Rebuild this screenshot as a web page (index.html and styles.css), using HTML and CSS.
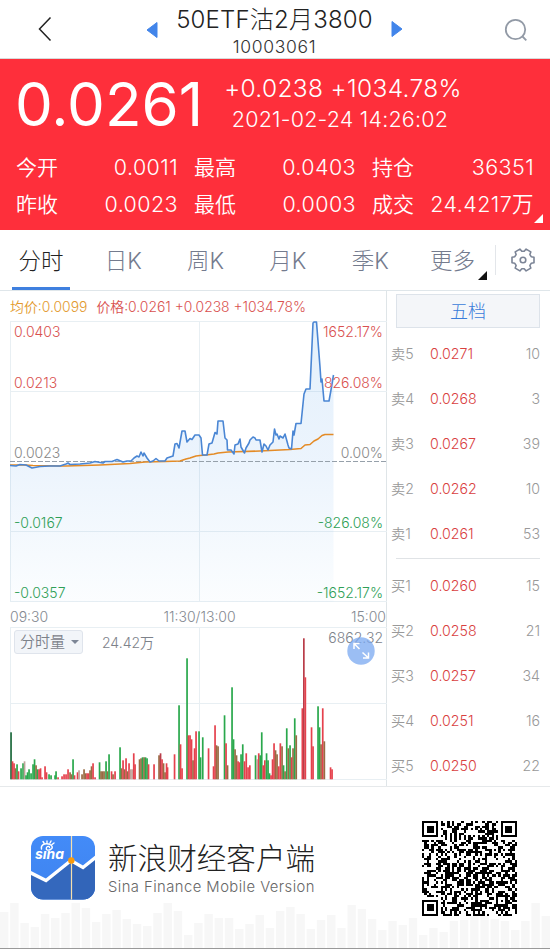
FILE: index.html
```html
<!DOCTYPE html>
<html lang="zh-CN">
<head>
    <meta charset="UTF-8">
    <meta name="viewport" content="width=device-width, initial-scale=1.0">
    <title>50ETF沽2月3800</title>
    <link rel="stylesheet" href="styles.css">
</head>
<body>
    <header class="header">
        <svg class="back" width="14" height="26" viewBox="0 0 14 26"><path d="M12.5 1.5 1.5 13l11 11.500"/></svg>
        <svg class="arrow" width="12" height="18" viewBox="0 0 12 18"><path d="M11 1.500v15L1 9z"/></svg>
        <div class="title">
            <h1><span>50ETF沽2月3800</span></h1>
            <p>10003061</p>
        </div>
        <svg class="arrow next" width="12" height="18" viewBox="0 0 12 18"><path d="M1 1.500v15L11 9z"/></svg>
        <svg class="search" width="24" height="24" viewBox="0 0 24 24"><circle cx="11.500" cy="11.500" r="9.700"/><path d="m18.500 18.500 3.800 3.800"/></svg>
    </header>

    <section class="quote">
        <div class="quote-top">
            <div class="price">0.0261</div>
            <div class="change">
                <p class="diff">+0.0238 +1034.78%</p>
                <p class="time">2021-02-24 14:26:02</p>
            </div>
        </div>
        <dl class="stats">
            <dt>今开</dt><dd>0.0011</dd><dt>最高</dt><dd>0.0403</dd><dt>持仓</dt><dd>36351</dd>
            <dt>昨收</dt><dd>0.0023</dd><dt>最低</dt><dd>0.0003</dd><dt>成交</dt><dd>24.4217万</dd>
        </dl>
        <i class="corner"></i>
    </section>

    <nav class="tabs">
        <a class="tab active">分时</a>
        <a class="tab">日K</a>
        <a class="tab">周K</a>
        <a class="tab">月K</a>
        <a class="tab">季K</a>
        <a class="tab more">更多<i></i></a>
        <span class="gear">
            <svg width="24" height="24" viewBox="0 0 24 24"><path d="M23 9.300V14.700L20.200 15.300 18.900 17.400 19.800 20.100 15.100 22.900 13.200 20.700H10.800L8.900 22.900 4.200 20.100 5.100 17.400 3.800 15.300 1 14.700V9.300L3.800 8.700 5.100 6.600 4.200 3.900 8.900 1.100 10.800 3.300H13.200L15.100 1.100 19.800 3.900 18.900 6.600 20.200 8.700Z"/><circle cx="12" cy="12" r="2.800"/></svg>
        </span>
    </nav>

    <main class="main">
        <div class="charts">
            <div class="legend"><span class="avg">均价:0.0099</span><span class="cur">价格:0.0261 +0.0238 +1034.78%</span></div>

            <div class="chart price-chart">
                <svg width="377" height="282" viewBox="10 321 377 282">
                    <defs>
                        <linearGradient id="area" x1="0" y1="0" x2="0" y2="1">
                            <stop offset="0" stop-color="#3f9be8" stop-opacity=".14"/>
                            <stop offset=".5" stop-color="#3f8fe8" stop-opacity=".1"/>
                            <stop offset="1" stop-color="#3f9be8" stop-opacity=".02"/>
                        </linearGradient>
                    </defs>
                    <path class="grid" d="M10 321.500h377M10 391.500h377M10 531.500h377M10 601.500h377M10.500 321v281M199.500 321v281"/>
                    <path id="priceArea" fill="url(#area)"/>
                    <path class="zero" d="M10 461.500h377"/>
                    <polyline class="avg-line" points="10,465 25,465 33,465.500 60,466 66,466 100,465 130,463.500 145,462 165,461.500 180,461 186,459 190,458 196,456 200,455.500 206,455 214,454 218,453 228,452 260,451 290,449.500 301,448.500 305,445 310,444.500 314,441 318,439 322,435.500 325,434.500 333.500,434.500"/>
                    <polyline id="priceLine" class="price-line"/>
                </svg>
                <div class="scale left">
                    <span class="up">0.0403</span><span class="up">0.0213</span><span>0.0023</span><span class="down">-0.0167</span><span class="down">-0.0357</span>
                </div>
                <div class="scale right">
                    <span class="up">1652.17%</span><span class="up">826.08%</span><span>0.00%</span><span class="down">-826.08%</span><span class="down">-1652.17%</span>
                </div>
            </div>

            <div class="axis"><span>09:30</span><span>11:30/13:00</span><span>15:00</span></div>

            <div class="chart volume-chart">
                <svg width="377" height="153" viewBox="10 627 377 153">
                    <path class="grid" d="M10 627.500h377M10 703.500h377M10 779.500h377M10.500 627v153M199.500 627v153"/>
                    <g id="volume"></g>
                </svg>
                <div class="volume-head">
                    <span class="select">分时量<i></i></span>
                    <span class="total">24.42万</span>
                    <span class="max">6862.32</span>
                </div>
                <svg class="expand" width="28" height="28" viewBox="0 0 28 28"><circle cx="14" cy="14" r="13.700"/><path d="M12.500 12 7 6.500M7 12V6.500h5.500M15.500 15.500l6 5.500M21.500 15.500V21H16"/></svg>
            </div>
        </div>

        <aside class="book">
            <div class="level">五档</div>
            <ul>
                <li><span>卖5</span><b>0.0271</b><em>10</em></li>
                <li><span>卖4</span><b>0.0268</b><em>3</em></li>
                <li><span>卖3</span><b>0.0267</b><em>39</em></li>
                <li><span>卖2</span><b>0.0262</b><em>10</em></li>
                <li><span>卖1</span><b>0.0261</b><em>53</em></li>
            </ul>
            <ul class="buy">
                <li><span>买1</span><b>0.0260</b><em>15</em></li>
                <li><span>买2</span><b>0.0258</b><em>21</em></li>
                <li><span>买3</span><b>0.0257</b><em>34</em></li>
                <li><span>买4</span><b>0.0251</b><em>16</em></li>
                <li><span>买5</span><b>0.0250</b><em>22</em></li>
            </ul>
        </aside>
    </main>

    <footer class="footer">
        <svg class="skyline" width="550" height="46" viewBox="0 903 550 46"><g id="skyline"></g></svg>
        <svg class="logo" width="64" height="64" viewBox="0 0 64 64">
            <defs>
                <linearGradient id="sky" x1="0" y1="0" x2="0" y2="1"><stop offset="0" stop-color="#438bf8"/><stop offset="1" stop-color="#3e83ee"/></linearGradient>
                <clipPath id="round"><rect width="64" height="63.500" rx="12"/></clipPath>
            </defs>
            <g clip-path="url(#round)">
                <rect width="64" height="64" fill="url(#sky)"/>
                <path fill="#3468bd" d="M0 38l15 8 25-20 12 7 12-9v40H0z"/>
                <path fill="#2f62b5" opacity=".5" d="M41 27l11 6 12-9v40H41z"/>
                <path fill="none" stroke="#fff" stroke-width="3.400" d="M-1 36.500 15 44.500 40 24.500 52 31.500 65 21"/>
                <path stroke="#f5dfae" stroke-width="1.200" d="M40.500 0v64"/>
                <circle cx="40.300" cy="24.500" r="3.200" fill="#f99a0c"/>
                <text class="sina" x="4" y="23" textLength="29" lengthAdjust="spacingAndGlyphs">sına</text>
                <path fill="none" stroke="#fff" stroke-width="1.400" stroke-linecap="round" d="M10.500 13c-1-4 3-6 7-5s5 4 2 5.500-5 0-4-2 3-1 3 0M13 7l-1-1.500M16 6.500V5M19 7l1-2M21 8.500l2-1.500"/>
            </g>
        </svg>
        <div class="brand">
            <h2>新浪财经客户端</h2>
            <p>Sina Finance Mobile Version</p>
        </div>
        <svg class="qr" width="95" height="95" viewBox="0 0 41 41" shape-rendering="crispEdges"><path id="qr"/></svg>
    </footer>

    <script>
        // 分时价格
        const price = '10,465.500 16,466 20,464.500 26,465 32,468 40,466.500 50,466 60,466 66,464 68,463 70,464.500 80,464 90,463 95,461.500 103,463 105,461.500 112,461.500 117,459.500 123,462 127,461 131,461 134,458 137,456 139,457 141,452 143,456 144,453 147,458 150,462 153,461 156,458.500 159,461 165,461 167,458 173,456 175,444 177,443.500 179,448 182,431 185,431 187,442 190,438.500 192,439.500 193,438 195,435 199,435 201,438 202.500,455 207,455 209,444 212,443 215,432.500 217,434 218,421 223,421 225,438 227,440 227.500,450 231,450 234,454 235,445 238,444 240,439 241,447 244.500,453 246,448 249,443 250,440 253,437 255,438 256,440 260,440 262,452 264,444 266,446 268,450 270,445 273,442 274.500,429 276,435 277,434 279,439 280,436 283,438 285,434 288,445 289,448 291.500,449 293,431 294,435 296,423.500 301,423.500 304,394 306,389 310,389 313,323 314,322 316.500,322 320,367 321,382 322,379 324,401 329,401 331,390 333.500,375';
        document.getElementById('priceLine').setAttribute('points', price);
        document.getElementById('priceArea').setAttribute('d', 'M' + price + ' V602 H10 Z');

        // 成交量: x, 高度, 颜色 (r 红 g 绿 b 混合 y 灰)
        const volume = '11 47 d,12.500 18 r,14 16 r,15.500 11 b,17 15 g,18.500 8 r,21 11 g,23 16 g,24.500 18 y,26 4 g,27.500 7 g,29 10 g,31 6 g,33 15 g,34.500 20 g,36 14 b,37.500 10 g,39 10 r,40.500 11 r,42 2 r,45 13 r,46.500 7 r,49 5 g,51 4 g,55 4 g,56 8 g,58 2 r,62 3 r,64 5 r,66 5 r,68 10 r,70 7 b,71.500 5 b,73 20 g,74.500 4 r,77.500 7 r,79 9 y,82 5 b,84 10 b,85.500 6 b,87 6 r,88.500 6 r,90 9 b,91.500 13 b,93 16 r,95 2 r,99.500 17 g,101 8 b,102.500 8 b,104 8 b,106 18 g,107.500 8 b,109 25 g,111.500 8 r,113 5 b,115 8 r,120 32 g,121.500 11 b,123 19 r,124.500 10 b,126 21 r,127.500 8 b,129 16 r,130.500 10 y,132 10 y,133.700 26 r,135 15 r,139.500 20 b,141 21 b,142.500 22 g,144 22 b,145.500 22 g,147 21 g,148.500 15 r,154 15 r,159 24 b,160.500 26 d2,162 20 r,163.500 16 b,165 7 b,166.500 16 r,167.500 12 r,174.500 25 r,179 74 g,180.500 35 r,182 11 r,187 121 g,188.500 44 r,190 44 r,191.500 40 r,193 19 b,194.500 31 r,196 48 r,199 48 g,200.500 22 g,202.700 42 g,208.500 31 r,213.500 13 r,215 54 r,216.500 34 b,218 33 b,224.500 64 g,226 36 r,227.500 14 b,232 92 g,233.500 40 g,235 30 b,236.500 24 b,238 18 r,239.500 17 r,241 25 g,242.700 35 g,244.500 18 r,246.200 26 r,248 12 r,249.800 14 r,255.500 24 g,257 20 y,258.700 26 r,260.200 24 g,261.700 47 g,263.200 14 r,264.800 19 r,266.500 26 g,268 19 g,269.500 6 g,271 4 r,272.500 20 r,274 36 r,275.500 29 b,277 25 b,278.700 13 r,280.300 36 r,282 33 b,283.500 14 g,285 8 b,286.700 51 g,288.300 31 b,290 34 g,291.500 22 r,293 31 b,294.700 61 g,296.200 44 b,302.300 71 r,303.800 141 d2,305.300 102 r,311.500 52 r,313 33 r,318 73 g,319.500 52 g,321 35 b,322.700 71 r,324.300 38 b,330.500 12 r,332 10 r';
        const colors = { r: '#e5414d', g: '#2aa84c', b: '#986b43', y: '#bfa49b', d: '#1e6b3d', d2: '#b93d49' };
        document.getElementById('volume').innerHTML = volume.split(',').map(item => {
            const [x, h, c] = item.split(' ');
            return `<rect x="${x - 0.8}" y="${779.3 - h}" width="1.7" height="${h}" fill="${colors[c]}"/>`;
        }).join('');

        // 底部楼群
        const tops = [913,904,924,928,915,919,914,904,909,923,915,911,920,925,927,914,904,912,936,924,915,919,919,930,925,916,929,912,908,915,930,921,916,929,906,910,920,931,922,926,919,936,929,933,922,921,917,917,920,922,931,922,904,917];
        document.getElementById('skyline').innerHTML = tops.map((y, i) =>
            `<rect x="${i * 10.22}" y="${y}" width="8.4" height="${949 - y}"/>`).join('');

        // 二维码
        const size = 41;
        let seed = 20210224;
        let d = '';
        const finder = (x, y) => {
            const r = Math.max(Math.abs(x - 3), Math.abs(y - 3));
            return r === 3 || r <= 1;
        };
        for (let y = 0; y < size; y++) {
            for (let x = 0; x < size; x++) {
                seed = (seed * 16807) % 2147483647;
                let on = (seed >> 12) % 100 < 52;
                if (x === 6 || y === 6) on = (x + y) % 2 === 0;
                if (Math.abs(x - 34) <= 2 && Math.abs(y - 34) <= 2) on = Math.max(Math.abs(x - 34), Math.abs(y - 34)) !== 1;
                if (x < 8 && y < 8) on = x < 7 && y < 7 && finder(x, y);
                if (x > 32 && y < 8) on = x > 33 && y < 7 && finder(x - 34, y);
                if (x < 8 && y > 32) on = x < 7 && y > 33 && finder(x, y - 34);
                if (on) d += `M${x} ${y}h1v1h-1z`;
            }
        }
        document.getElementById('qr').setAttribute('d', d);
    </script>
</body>
</html>
```
FILE: styles.css
```css
* {
    box-sizing: border-box;
    margin: 0;
    padding: 0;
}

body {
    width: 550px;
    height: 949px;
    overflow: hidden;
    background: #fff;
    font-family: Inter, "Noto Sans CJK SC", sans-serif;
    font-weight: 350;
    color: #222;
}

svg {
    display: block;
    flex: none;
}

i, em, b {
    font-style: normal;
    font-weight: inherit;
}

.header {
    display: flex;
    height: 59px;
    padding: 0 22px 0 38px;
    border-bottom: 1px solid #d8dada;
}

.back {
    margin-top: 16px;
    fill: none;
    stroke: #222;
    stroke-width: 1.5;
}

.arrow {
    margin: 21px 0 0 94px;
    fill: #4285ea;
    stroke: #4285ea;
    stroke-linejoin: round;
}

.arrow.next {
    margin: 20px 0 0;
}

.title {
    width: 233px;
    text-align: center;
}

.title h1 {
    height: 36px;
    font-size: 24px;
    font-weight: 300;
    line-height: 39px;
    letter-spacing: .2px;
}

.title p {
    font-size: 17.5px;
    font-weight: 300;
    line-height: 21px;
    letter-spacing: .7px;
    color: #333;
}

.search {
    margin: 18px 0 0 auto;
    fill: none;
    stroke: #929aa6;
    stroke-width: 1.8;
}

.quote {
    position: relative;
    height: 171px;
    background: #fe2f3b;
    color: #fff;
}

.quote-top {
    display: flex;
    height: 90px;
}

.price {
    width: 208px;
    padding-left: 15px;
    font-size: 60px;
    font-weight: 400;
    line-height: 90px;
}

.change {
    width: 270px;
    padding-top: 14px;
    text-align: center;
}

.diff {
    font-size: 24.5px;
    line-height: 30px;
    letter-spacing: .35px;
}

.time {
    margin: 1px 6px 0 0;
    font-size: 21.5px;
    line-height: 31px;
    letter-spacing: .2px;
}

.stats {
    display: grid;
    grid-template-columns: repeat(3, 42px 104px);
    grid-template-rows: 37px 37px;
    column-gap: 16px;
    padding: 0 16px;
    font-size: 21.5px;
    line-height: 37px;
    white-space: nowrap;
}

.stats dt {
    font-size: 21px;
}

.stats dd {
    text-align: right;
    letter-spacing: .4px;
}

.corner {
    position: absolute;
    right: 7px;
    bottom: 7px;
    border-left: 9px solid transparent;
    border-bottom: 9px solid #fff;
}

.tabs {
    display: flex;
    height: 61px;
    padding-left: 12px;
    border-bottom: 1px solid #dfe6ea;
    font-size: 22.5px;
    font-weight: 300;
    line-height: 62px;
    color: #747b8e;
}

.tab {
    width: 58px;
    height: 60px;
    margin-right: 24.3px;
    text-align: center;
}

.tab.active {
    border-bottom: 3px solid #3f80df;
    color: #222;
}

.tab.more {
    position: relative;
    margin-right: 14px;
}

.tab.more i {
    position: absolute;
    right: -6px;
    bottom: 10px;
    border-left: 9px solid transparent;
    border-bottom: 9px solid #111;
}

.gear {
    height: 30px;
    margin-top: 15px;
    padding: 3px 0 0 15px;
    border-left: 1px solid #e3e6ea;
}

.gear svg {
    fill: none;
    stroke: #7b8496;
    stroke-width: 1.6;
    stroke-linejoin: round;
}

.main {
    display: flex;
    height: 496px;
    border-bottom: 1px solid #e6e9eb;
}

.charts {
    width: 387px;
    padding-left: 10px;
    border-right: 1px solid #dfe5e8;
}

.legend {
    display: flex;
    gap: 9px;
    height: 30px;
    font-size: 13.9px;
    line-height: 32px;
    white-space: nowrap;
}

.avg {
    color: #e39a2e;
}

.cur,
.up {
    color: #d9514f;
}

.down {
    color: #2f9f57;
}

.chart {
    position: relative;
}

.grid {
    fill: none;
    stroke: #e8eff3;
}

.zero {
    stroke: #96a0aa;
    stroke-dasharray: 5 2;
}

.avg-line,
.price-line {
    fill: none;
    stroke: #e48b26;
    stroke-width: 1.6;
    stroke-linejoin: round;
}

.price-line {
    stroke: #4a86d4;
}

/* 刻度浮在图上 */
.scale {
    position: absolute;
    top: 2px;
    display: grid;
    grid-template-rows: 51px 70px 70px 70px 18px;
    font-size: 14px;
    line-height: 18px;
    color: #888;
}

.scale.left {
    left: 4px;
}

.scale.right {
    right: 3px;
    text-align: right;
}

.axis {
    display: flex;
    justify-content: space-between;
    height: 24px;
    font-size: 14px;
    line-height: 27px;
    color: #858a92;
}

.volume-head {
    position: absolute;
    top: 3px;
    left: 4px;
    right: 3px;
    display: flex;
    font-size: 14px;
    line-height: 26px;
    color: #7d828a;
}

.select {
    display: flex;
    align-items: center;
    gap: 6px;
    width: 69px;
    height: 24px;
    padding-left: 5px;
    border: 1px solid #dfe4ec;
    border-radius: 3px;
    background: #f2f5f9;
    font-size: 15px;
}

.select i {
    border: 4px solid transparent;
    border-top-color: #7d8696;
    border-bottom: 0;
}

.total {
    margin-left: 19px;
}

.max {
    margin: -5px 0 0 auto;
}

.expand {
    position: absolute;
    top: 10px;
    right: 11px;
}

.expand circle {
    fill: #7aa8f0;
    opacity: .75;
}

.expand path {
    fill: none;
    stroke: #fff;
    stroke-width: 1.5;
}

.book {
    flex: 1;
    padding: 3px 10px 0 4px;
}

.level {
    height: 34px;
    margin: 0 0 3px 5px;
    border: 1px solid #dde3ea;
    background: #f4f6f9;
    font-size: 18px;
    font-weight: 300;
    line-height: 33px;
    text-align: center;
    color: #3a7cda;
}

.book ul {
    list-style: none;
}

.book .buy {
    margin: 2px 0 0 5px;
    padding-top: 4px;
    border-top: 1px solid #e0e3e6;
}

.buy li {
    margin-left: -5px;
}

.book li {
    display: flex;
    height: 45px;
    font-size: 14.2px;
    line-height: 45px;
    color: #999;
}

.book li span {
    width: 39px;
}

.book li b {
    color: #d9413f;
}

.book li em {
    margin-left: auto;
}

.footer {
    position: relative;
    display: flex;
    height: 162px;
    padding: 34px 33px 0 31px;
    border-bottom: 1px solid #999;
}

.skyline {
    position: absolute;
    left: 0;
    bottom: 0;
    fill: #f7f7f7;
}

.logo {
    position: relative;
    margin-top: 15px;
}

.sina {
    font: italic 700 14px Inter, sans-serif;
    fill: #fff;
}

.brand {
    position: relative;
    margin: 18px 0 0 13px;
}

.brand h2 {
    font-size: 29.6px;
    font-weight: 300;
    line-height: 38px;
}

.brand p {
    font-size: 14.8px;
    line-height: 20px;
    letter-spacing: .45px;
    color: #666;
    white-space: nowrap;
}

.qr {
    position: relative;
    margin-left: auto;
    background: #fff;
}
```
